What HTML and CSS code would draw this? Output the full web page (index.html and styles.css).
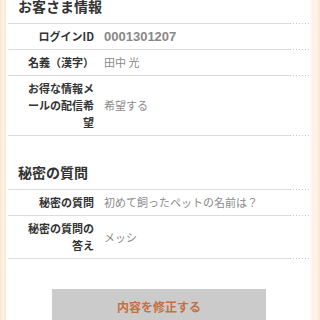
FILE: index.html
```html
<!DOCTYPE html>
<html lang="ja">
<head>
<meta charset="UTF-8">
<meta name="viewport" content="width=device-width, initial-scale=1.0">
<title>お客さま情報</title>
<link rel="stylesheet" href="styles.css">
</head>
<body>
<div class="page">
    <h2 class="section-title first">お客さま情報</h2>
    <div class="info-row">
        <div class="info-label">ログインID</div>
        <div class="info-value num">0001301207</div>
    </div>
    <div class="info-row">
        <div class="info-label">名義（漢字）</div>
        <div class="info-value">田中 光</div>
    </div>
    <div class="info-row">
        <div class="info-label">お得な情報メールの配信希望</div>
        <div class="info-value">希望する</div>
    </div>

    <h2 class="section-title">秘密の質問</h2>
    <div class="info-row">
        <div class="info-label">秘密の質問</div>
        <div class="info-value">初めて飼ったペットの名前は？</div>
    </div>
    <div class="info-row">
        <div class="info-label">秘密の質問の答え</div>
        <div class="info-value">メッシ</div>
    </div>

    <div class="actions">
        <button class="edit-btn">内容を修正する</button>
    </div>
</div>
</body>
</html>
```

FILE: styles.css
```css
/* customer info page */
body {
    margin: 0;
    padding: 0;
    font-family: "Noto Sans CJK JP", "Noto Sans", sans-serif;
    background: linear-gradient(to right, #f9e8d3 0, #fdf3e6 3px, #f9e8d3 6px, #fff 6px, #fff 310px, #fcefdf 313px, #fdf5ea 316px, #f9e6cf 320px);
    height: 320px;
    overflow: hidden;
}
.page {
    margin: 0 10px 0 8px;
}
.section-title {
    margin: 26px 0 0;
    padding: 0 0 8px 10px;
    font-size: 14px;
    line-height: 20px;
    font-weight: bold;
    color: #333;
    background: linear-gradient(#dcdcdc, #dcdcdc) no-repeat left bottom / calc(100% - 20px) 1px,
        repeating-linear-gradient(to right, #c8c8c8 0 1px, transparent 1px 3px) no-repeat right bottom / 20px 1px;
}
.section-title.first {
    margin-top: -4px;
}
.info-row {
    display: flex;
    align-items: center;
    gap: 10px;
    padding: 4px 0 5px;
    line-height: 17px;
    background: linear-gradient(#dcdcdc, #dcdcdc) no-repeat left bottom / calc(100% - 20px) 1px,
        repeating-linear-gradient(to right, #c8c8c8 0 1px, transparent 1px 3px) no-repeat right bottom / 20px 1px;
}
.info-label {
    width: 72px;
    margin-left: 14px;
    flex-shrink: 0;
    text-align: right;
    font-size: 11px;
    font-weight: bold;
    color: #333;
}
.info-value {
    font-size: 11px;
    color: #8a8a8a;
}
.info-value.num {
    font-family: "Liberation Sans", Arial, sans-serif;
    font-size: 13px;
    font-weight: bold;
    color: #888;
}
.actions {
    margin-top: 30px;
    display: flex;
    justify-content: center;
}
.edit-btn {
    width: 214px;
    height: 36px;
    border: none;
    background-color: #cbcbcb;
    color: #c6703f;
    font-family: "Noto Sans CJK JP", sans-serif;
    font-size: 12px;
    font-weight: bold;
    padding: 0 0 2px;
}
```
